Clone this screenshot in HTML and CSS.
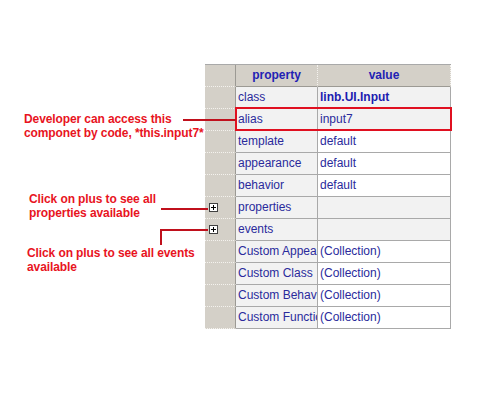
FILE: index.html
```html
<!DOCTYPE html>
<html>
<head>
<meta charset="utf-8">
<link rel="stylesheet" href="styles.css">
</head>
<body>
<div class="page">
  <div class="grid">
    <div class="gut hdr"></div>
    <div class="hd">property</div>
    <div class="hd last">value</div>

    <div class="gut"></div><div class="pc">class</div><div class="vc grey bold">linb.UI.Input</div>
    <div class="gut"></div><div class="pc">alias</div><div class="vc grey">input7</div>
    <div class="gut"></div><div class="pc">template</div><div class="vc">default</div>
    <div class="gut"></div><div class="pc">appearance</div><div class="vc">default</div>
    <div class="gut"></div><div class="pc">behavior</div><div class="vc">default</div>
    <div class="gut"><span class="plus"></span></div><div class="pc">properties</div><div class="vc grey"></div>
    <div class="gut"><span class="plus"></span></div><div class="pc">events</div><div class="vc grey"></div>
    <div class="gut"></div><div class="pc">Custom Appearance</div><div class="vc">(Collection)</div>
    <div class="gut"></div><div class="pc">Custom Class</div><div class="vc">(Collection)</div>
    <div class="gut"></div><div class="pc">Custom Behaviors</div><div class="vc">(Collection)</div>
    <div class="gut"></div><div class="pc">Custom Functions</div><div class="vc">(Collection)</div>
  </div>

  <div class="hilite"></div>

  <div class="note n1">Developer can access this<br>componet by code, *this.input7*</div>
  <div class="ln l1"></div>

  <div class="note n2">Click on plus to see all<br>properties available</div>
  <div class="ln l2"></div>

  <div class="note n3">Click on plus to see all events<br>available</div>
  <div class="ln l3h"></div>
  <div class="ln l3v"></div>
</div>
</body>
</html>
```
FILE: styles.css
```css
html, body {
  margin: 0;
  padding: 0;
  background: #ffffff;
}
.page {
  position: relative;
  width: 492px;
  height: 414px;
  padding: 64px 0 0 205px;
  box-sizing: border-box;
  font-family: "Liberation Sans", Arial, sans-serif;
}
.grid {
  display: grid;
  grid-template-columns: 31px 82px 133px;
  grid-auto-rows: 22px;
  width: 246px;
  border-top: 1px solid #a9a9a9;
  box-sizing: border-box;
}
.grid > div {
  box-sizing: border-box;
  font-size: 12px;
  line-height: 21px;
  white-space: nowrap;
  overflow: hidden;
}
.gut {
  background: #d4d0c8;
  border-bottom: 1px dotted #f4f2ee;
  border-right: 1px solid #9c9a94;
  display: flex;
  align-items: center;
  padding-left: 4px;
}
.hd {
  background: #d4d0c8;
  color: #2222b4;
  font-weight: bold;
  text-align: center;
  border-right: 1px dotted #f4f2ee;
  border-bottom: 1px solid #9c9a94;
}
.hd.last {
  border-right: 1px dotted #f4f2ee;
}
.pc {
  background: #f2f2f2;
  color: #2a2a9c;
  padding-left: 2px;
  border-right: 1px solid #a9a9a9;
  border-bottom: 1px solid #a9a9a9;
  text-overflow: clip;
}
.vc {
  background: #ffffff;
  color: #2a2a9c;
  padding-left: 2px;
  border-right: 1px solid #a9a9a9;
  border-bottom: 1px solid #a9a9a9;
}
.vc.grey {
  background: #f2f2f2;
}
.vc.bold {
  font-weight: bold;
  color: #1c1cb0;
}
.plus {
  position: relative;
  width: 7px;
  height: 7px;
  border: 1px solid #404040;
  background: #ffffff;
  display: block;
}
.plus::before,
.plus::after {
  content: "";
  position: absolute;
  background: #000000;
}
.plus::before {
  left: 1px;
  top: 3px;
  width: 5px;
  height: 1px;
}
.plus::after {
  left: 3px;
  top: 1px;
  width: 1px;
  height: 5px;
}
.hilite {
  position: absolute;
  left: 235px;
  top: 107px;
  width: 217px;
  height: 24px;
  border: 2px solid #e01020;
  box-sizing: border-box;
}
.note {
  position: absolute;
  color: #e8141e;
  font-weight: bold;
  font-size: 12px;
  line-height: 14px;
  white-space: nowrap;
  letter-spacing: -0.1px;
}
.n1 { left: 24px; top: 112px; }
.n2 { left: 29px; top: 192px; }
.n3 { left: 27px; top: 246px; }
.ln {
  position: absolute;
  background: #c0101c;
}
.l1 { left: 183px; top: 119px; width: 53px; height: 2px; }
.l2 { left: 161px; top: 208px; width: 47px; height: 2px; }
.l3h { left: 161px; top: 229px; width: 47px; height: 2px; }
.l3v { left: 160px; top: 229px; width: 2px; height: 16px; }
```
